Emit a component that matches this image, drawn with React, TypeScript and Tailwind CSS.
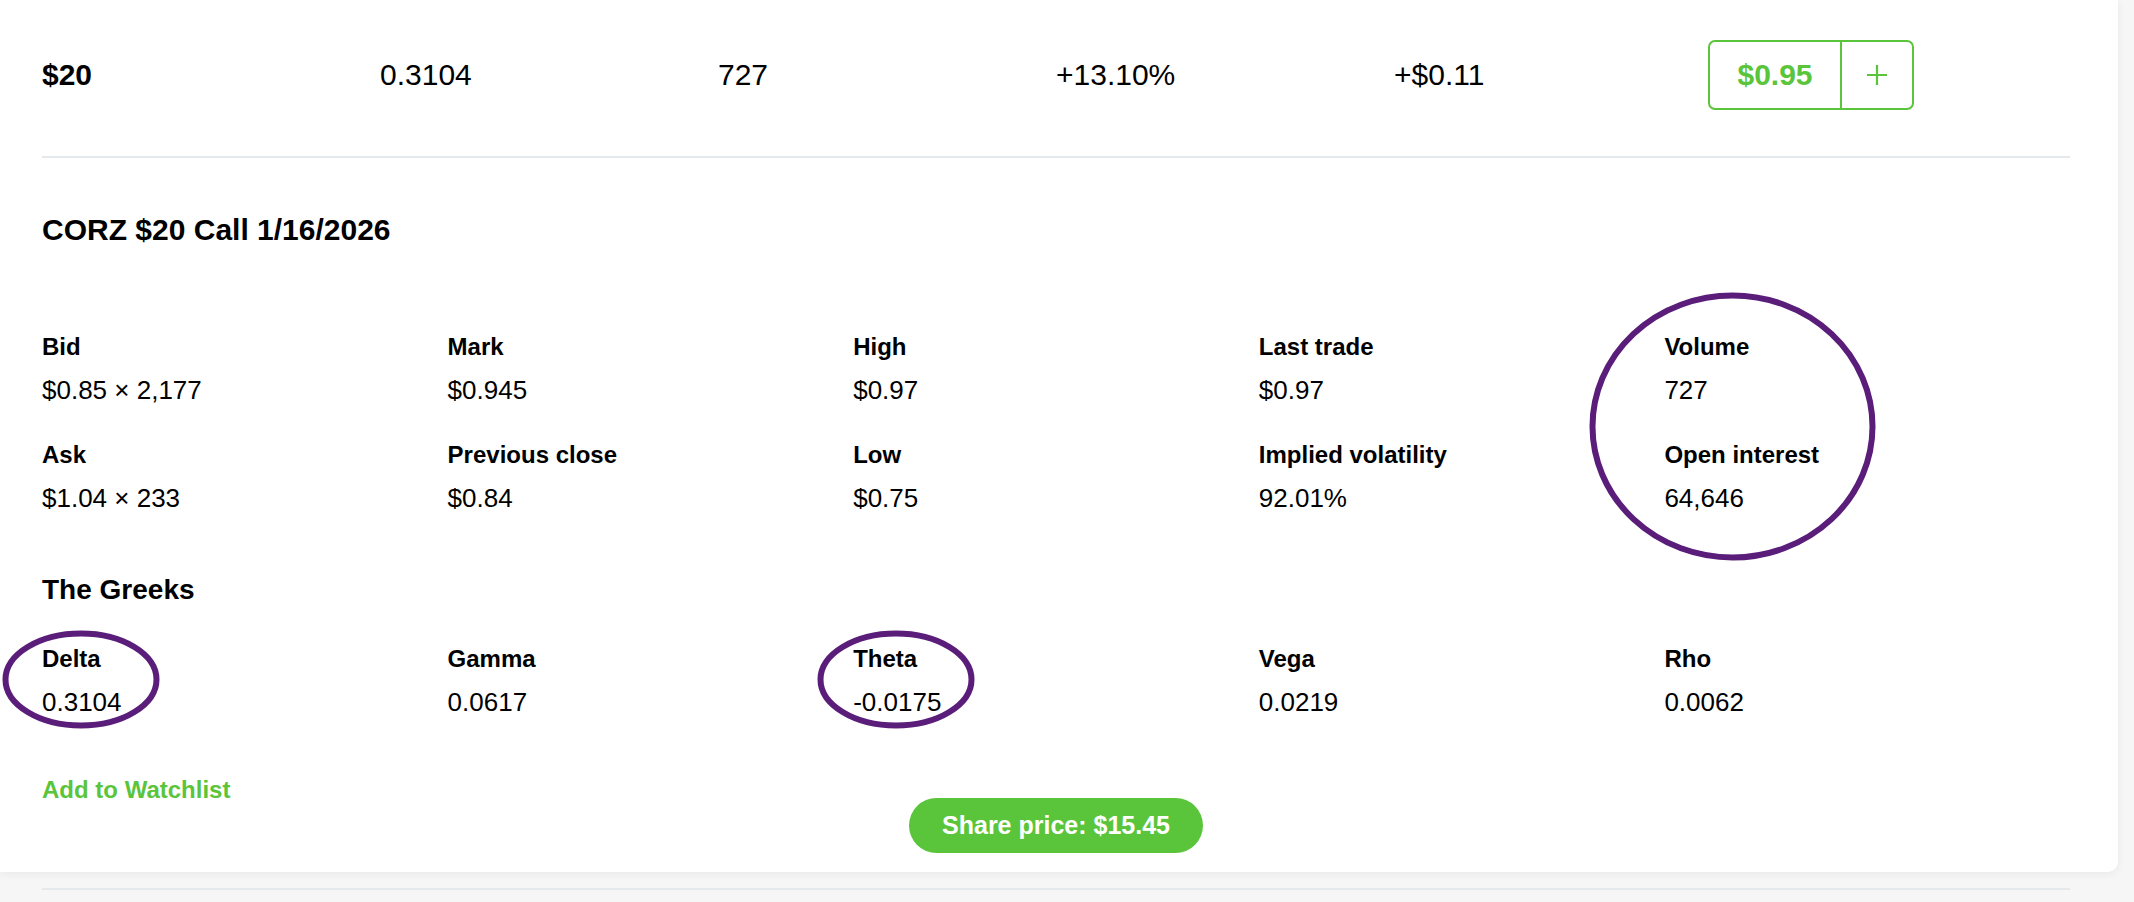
import React from "react";

const GREEN = "text-[#5ac53b]";

function Stat({ label, value }: { label: string; value: string }) {
  return (
    <div className="flex flex-col">
      <div className="text-[24px] font-bold leading-[32px]">{label}</div>
      <div className="mt-[11px] text-[26px] leading-[32px]">{value}</div>
    </div>
  );
}

function Ellipse({ w, h, className }: { w: number; h: number; className: string }) {
  return (
    <svg className={className} width={w} height={h} viewBox={`0 0 ${w} ${h}`}>
      <ellipse cx={w / 2} cy={h / 2} rx={w / 2 - 3.5} ry={h / 2 - 3.5} fill="none" stroke="#5a1e7a" strokeWidth={6} />
    </svg>
  );
}

export default function App() {
  const stats = [
    ["Bid", "$0.85 × 2,177"],
    ["Mark", "$0.945"],
    ["High", "$0.97"],
    ["Last trade", "$0.97"],
    ["Volume", "727"],
    ["Ask", "$1.04 × 233"],
    ["Previous close", "$0.84"],
    ["Low", "$0.75"],
    ["Implied volatility", "92.01%"],
    ["Open interest", "64,646"],
  ];
  const greeks = [
    ["Delta", "0.3104"],
    ["Gamma", "0.0617"],
    ["Theta", "-0.0175"],
    ["Vega", "0.0219"],
    ["Rho", "0.0062"],
  ];
  return (
    <div className="relative w-[2134px] h-[902px] overflow-hidden bg-[#f6f6f7] text-black font-['Liberation_Sans',Arial,sans-serif]">
      <div className="w-[2118px] h-[872px] bg-white rounded-br-[10px] shadow-[0_2px_10px_rgba(0,0,0,0.06)] pl-[42px] pr-[48px]">
        <div className="grid grid-cols-6 h-[150px] items-center text-[30px] leading-[36px]">
          <div className="font-bold">$20</div>
          <div>0.3104</div>
          <div>727</div>
          <div>+13.10%</div>
          <div>+$0.11</div>
          <div>
            <div className="-ml-[24px] flex h-[70px] w-[206px] rounded-[7px] border-2 border-[#5ac53b]">
              <div className={`flex w-[132px] items-center justify-center border-r-2 border-[#5ac53b] text-[30px] font-bold ${GREEN}`}>
                $0.95
              </div>
              <div className="flex flex-1 items-center justify-center">
                <svg width="22" height="22" viewBox="0 0 22 22">
                  <path d="M11 1v20M1 11h20" stroke="#5ac53b" strokeWidth="2.2" />
                </svg>
              </div>
            </div>
          </div>
        </div>
        <div className="mt-[6px] h-[2px] bg-[#e3e9ed]" />
        <div className="mt-[54px] text-[30px] font-bold leading-[36px]">CORZ $20 Call 1/16/2026</div>
        <div className="mt-[83px] grid grid-cols-5 gap-y-[33px]">
          {stats.map(([l, v]) => (
            <Stat key={l} label={l} value={v} />
          ))}
        </div>
        <div className="mt-[58px] text-[28px] font-bold leading-[36px]">The Greeks</div>
        <div className="mt-[35px] grid grid-cols-5">
          {greeks.map(([l, v]) => (
            <Stat key={l} label={l} value={v} />
          ))}
        </div>
        <div className={`mt-[56px] text-[24px] font-bold leading-[32px] ${GREEN}`}>Add to Watchlist</div>
      </div>
      <div className="ml-[42px] mt-[16px] h-[2px] w-[2028px] bg-[#e3e9ed]" />

      <Ellipse w={287} h={269} className="absolute left-[1589px] top-[292px]" />
      <Ellipse w={158} h={99} className="absolute left-[2px] top-[630px]" />
      <Ellipse w={158} h={99} className="absolute left-[817px] top-[630px]" />

      <div className="absolute left-[909px] top-[798px] flex h-[55px] w-[294px] items-center justify-center rounded-full bg-[#5ac53b] text-[25px] font-bold text-white">
        Share price: $15.45
      </div>
    </div>
  );
}
